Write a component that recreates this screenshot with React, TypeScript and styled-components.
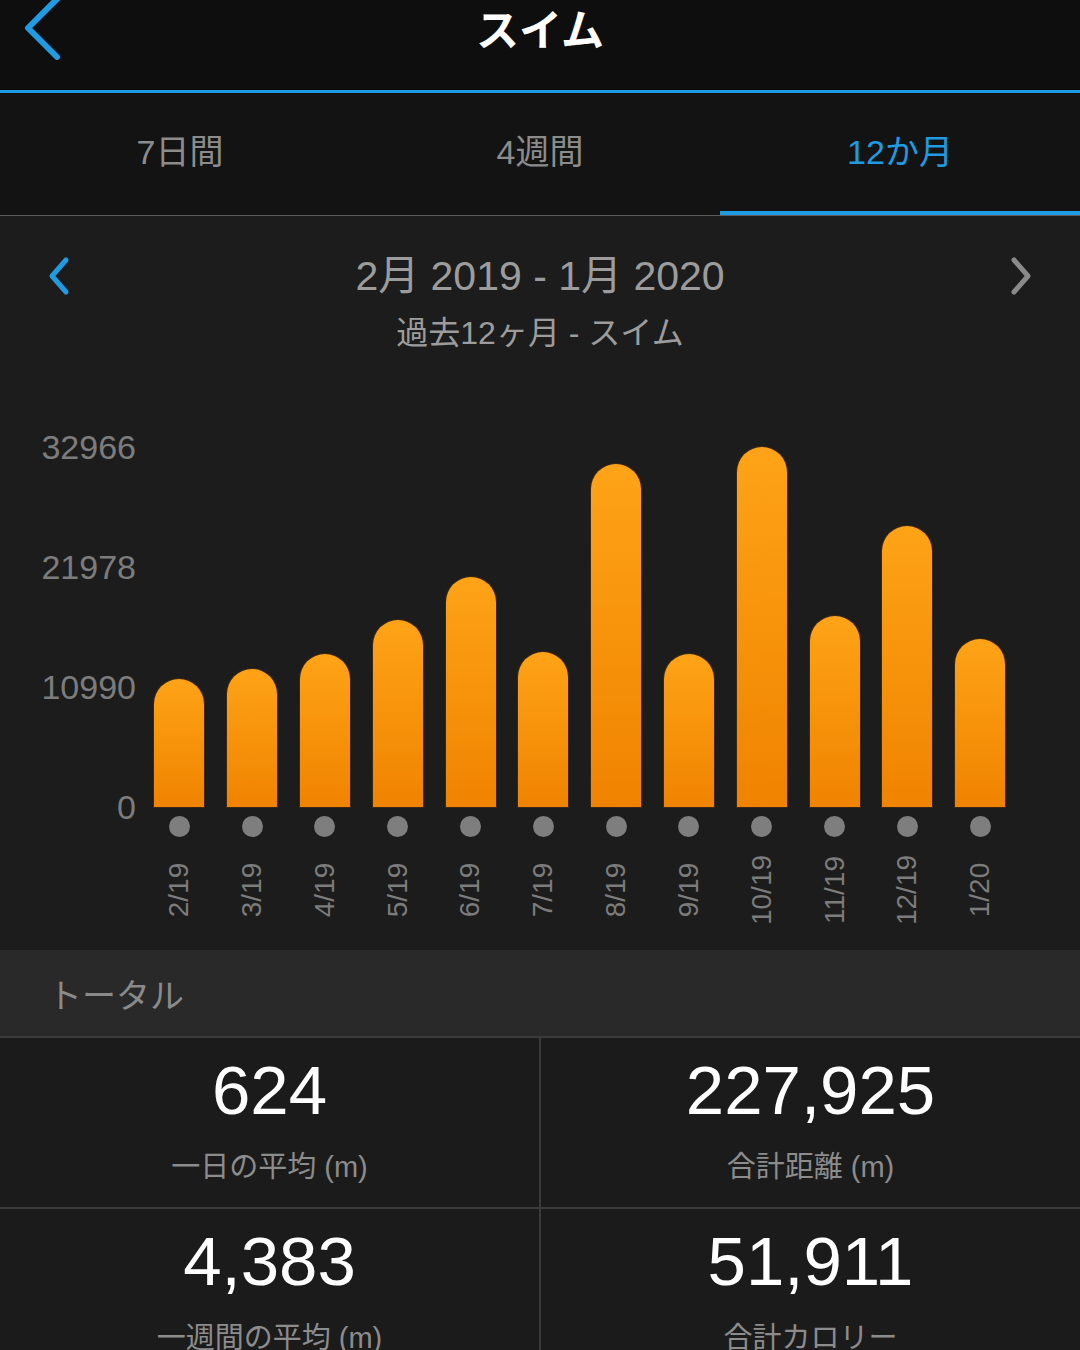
import React from "react";
import styled, { createGlobalStyle } from "styled-components";

const GlobalStyle = createGlobalStyle`
  html, body { margin: 0; padding: 0; background: #1c1c1c; }
  body { font-family: "Liberation Sans", "Noto Sans CJK JP", sans-serif; }
  * { box-sizing: border-box; }
`;

const Screen = styled.div`
  width: 1080px;
  height: 1350px;
  overflow: hidden;
  background: #1b1b1b;
  display: flex;
  flex-direction: column;
`;

const Header = styled.header`
  height: 93px;
  flex: none;
  background: #0e0e0e;
  border-bottom: 3px solid #1e9be2;
  display: grid;
  grid-template-columns: 120px 1fr 120px;
  align-items: start;
`;

const BackIcon = styled.svg`
  display: block;
  margin-left: 20px;
`;

const Title = styled.h1`
  margin: 0;
  text-align: center;
  color: #ffffff;
  font-family: "Noto Sans CJK JP", sans-serif;
  font-weight: 700;
  font-size: 43px;
  line-height: 54px;
`;

const Tabs = styled.nav`
  height: 123px;
  flex: none;
  background: #131313;
  border-bottom: 1px solid #5c5c5c;
  display: grid;
  grid-template-columns: repeat(3, 1fr);
`;

const Tab = styled.div<{ $active?: boolean }>`
  display: flex;
  align-items: center;
  justify-content: center;
  padding-bottom: 6px;
  border-bottom: 4px solid ${(p) => (p.$active ? "#1e9be2" : "transparent")};
  color: ${(p) => (p.$active ? "#1e9be2" : "#8c8c8c")};
  font-size: 34px;
`;

const ChartPanel = styled.section`
  height: 734px;
  flex: none;
  background: #1c1c1c;
  padding: 37px 0 15px;
  display: flex;
  flex-direction: column;
`;

const NavRow = styled.div`
  height: 46px;
  padding: 0 47px;
  display: flex;
  align-items: center;
  justify-content: space-between;
`;

const NavIcon = styled.svg`
  display: block;
`;

const RangeTitle = styled.div`
  color: #9c9c9c;
  font-size: 41px;
  line-height: 46px;
`;

const RangeSub = styled.div`
  margin-top: 14px;
  text-align: center;
  color: #9c9c9c;
  font-size: 32px;
  line-height: 40px;
`;

const ChartBody = styled.div`
  margin-top: 74px;
  display: grid;
  grid-template-columns: 136px 1fr;
  align-items: start;
`;

const YAxis = styled.div`
  height: 400px;
  display: flex;
  flex-direction: column;
  justify-content: space-between;
  text-align: right;
`;

const YLabel = styled.div`
  color: #7c7c7c;
  font-size: 34px;
  line-height: 40px;
`;

const Columns = styled.div`
  margin-left: 7px;
  display: grid;
  grid-template-columns: repeat(12, 72.8px);
`;

const Column = styled.div`
  display: flex;
  flex-direction: column;
  align-items: center;
`;

const BarSlot = styled.div`
  height: 380px;
  display: flex;
  align-items: flex-end;
`;

const Bar = styled.div`
  width: 50px;
  border-radius: 25px 25px 0 0;
  background: linear-gradient(to bottom, #fea317, #f08300);
  box-shadow: 0 0 0 1px rgba(120, 60, 0, 0.35);
`;

const Dot = styled.div`
  margin-top: 9px;
  width: 21px;
  height: 21px;
  border-radius: 50%;
  background: #7e7e7e;
`;

const LabelSlot = styled.div`
  margin-top: 8px;
  height: 90px;
  display: flex;
  align-items: center;
  justify-content: center;
`;

const XLabel = styled.div`
  transform: rotate(-90deg);
  white-space: nowrap;
  color: #7c7c7c;
  font-size: 28px;
  line-height: 32px;
`;

const TotalHeader = styled.div`
  height: 88px;
  flex: none;
  background: #292929;
  border-bottom: 2px solid #3a3a3a;
  padding-left: 48px;
  display: flex;
  align-items: center;
  color: #8a8a8a;
  font-size: 34px;
`;

const StatsGrid = styled.div`
  display: grid;
  grid-template-columns: 1fr 1fr;
  grid-auto-rows: 169px;
  gap: 2px;
  background: #3a3a3a;
`;

const StatCell = styled.div`
  background: #1b1b1b;
  padding-top: 15px;
  display: flex;
  flex-direction: column;
  align-items: center;
`;

const StatValue = styled.div`
  color: #ffffff;
  font-size: 69px;
  line-height: 76px;
`;

const StatLabel = styled.div`
  margin-top: 20px;
  color: #8c8c8c;
  font-size: 29px;
  line-height: 36px;
`;

const MAX = 32966;
const PLOT_H = 360;

const months: { label: string; value: number }[] = [
  { label: "2/19", value: 11722 },
  { label: "3/19", value: 12638 },
  { label: "4/19", value: 14012 },
  { label: "5/19", value: 17126 },
  { label: "6/19", value: 21064 },
  { label: "7/19", value: 14195 },
  { label: "8/19", value: 31413 },
  { label: "9/19", value: 14012 },
  { label: "10/19", value: 32966 },
  { label: "11/19", value: 17492 },
  { label: "12/19", value: 25735 },
  { label: "1/20", value: 15386 },
];

const stats = [
  { value: "624", label: "一日の平均 (m)" },
  { value: "227,925", label: "合計距離 (m)" },
  { value: "4,383", label: "一週間の平均 (m)" },
  { value: "51,911", label: "合計カロリー" },
];

export default function App() {
  return (
    <>
      <GlobalStyle />
      <Screen>
        <Header>
          <BackIcon width="50" height="60" viewBox="0 0 50 60">
            <polyline
              points="40,-4 8,28 37,57"
              fill="none"
              stroke="#1e9be2"
              strokeWidth="6"
              strokeLinecap="round"
              strokeLinejoin="round"
            />
          </BackIcon>
          <Title>スイム</Title>
          <div />
        </Header>
        <Tabs>
          <Tab>7日間</Tab>
          <Tab>4週間</Tab>
          <Tab $active>12か月</Tab>
        </Tabs>
        <ChartPanel>
          <NavRow>
            <NavIcon width="24" height="40" viewBox="0 0 24 40">
              <polyline
                points="19,4 5,20 19,36"
                fill="none"
                stroke="#1e9be2"
                strokeWidth="5"
                strokeLinecap="round"
                strokeLinejoin="round"
              />
            </NavIcon>
            <RangeTitle>2月 2019 - 1月 2020</RangeTitle>
            <NavIcon width="24" height="40" viewBox="0 0 24 40">
              <polyline
                points="5,4 19,20 5,36"
                fill="none"
                stroke="#8a8a8a"
                strokeWidth="5"
                strokeLinecap="round"
                strokeLinejoin="round"
              />
            </NavIcon>
          </NavRow>
          <RangeSub>過去12ヶ月 - スイム</RangeSub>
          <ChartBody>
            <YAxis>
              <YLabel>32966</YLabel>
              <YLabel>21978</YLabel>
              <YLabel>10990</YLabel>
              <YLabel>0</YLabel>
            </YAxis>
            <Columns>
              {months.map((m) => (
                <Column key={m.label}>
                  <BarSlot>
                    <Bar style={{ height: `${(m.value / MAX) * PLOT_H}px` }} />
                  </BarSlot>
                  <Dot />
                  <LabelSlot>
                    <XLabel>{m.label}</XLabel>
                  </LabelSlot>
                </Column>
              ))}
            </Columns>
          </ChartBody>
        </ChartPanel>
        <TotalHeader>トータル</TotalHeader>
        <StatsGrid>
          {stats.map((s) => (
            <StatCell key={s.label}>
              <StatValue>{s.value}</StatValue>
              <StatLabel>{s.label}</StatLabel>
            </StatCell>
          ))}
        </StatsGrid>
      </Screen>
    </>
  );
}
